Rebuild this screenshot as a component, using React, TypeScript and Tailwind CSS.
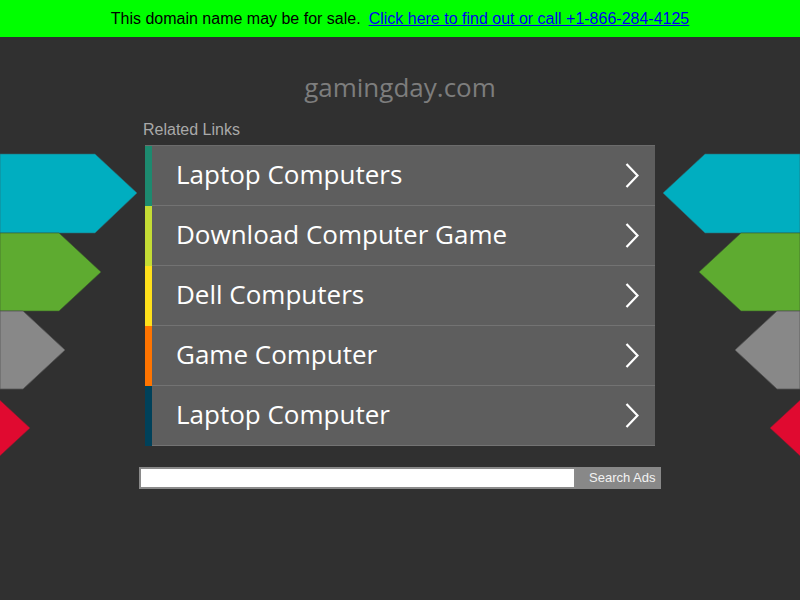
import React from "react";

const links = [
  { label: "Laptop Computers", color: "bg-[#1d8a6f]" },
  { label: "Download Computer Game", color: "bg-[#c4dc35]" },
  { label: "Dell Computers", color: "bg-[#ffe01b]" },
  { label: "Game Computer", color: "bg-[#ff7400]" },
  { label: "Laptop Computer", color: "bg-[#00415a]" },
];

function Chevron() {
  return (
    <svg width="14" height="25" viewBox="0 0 14 25" className="shrink-0">
      <path d="M1.5 1 L12.5 12.5 L1.5 24" fill="none" stroke="#ffffff" strokeWidth="2.2" />
    </svg>
  );
}

// decorative arrow shapes on both edges of the page
function LeftArrows() {
  return (
    <svg width="140" height="320" viewBox="0 0 140 320" className="pointer-events-none absolute left-0 top-[150px]">
      <polygon points="0,4 95,4 137,43 95,83 0,83" fill="#00aec0" stroke="#2a6c74" strokeWidth="0.6" />
      <polygon points="0,83 59,83 101,122 59,161 0,161" fill="#5eab30" stroke="#3b5a2c" strokeWidth="0.6" />
      <polygon points="0,161 23,161 65,200 23,239 0,239" fill="#888888" stroke="#555555" strokeWidth="0.8" />
      <polygon points="-12,239 -12,239 30,278 -12,317" fill="#e00a30" stroke="#7a2030" strokeWidth="0.6" />
    </svg>
  );
}

function RightArrows() {
  return (
    <svg width="140" height="320" viewBox="0 0 140 320" className="pointer-events-none absolute right-0 top-[150px]">
      <polygon points="140,4 45,4 3,43 45,83 140,83" fill="#00aec0" stroke="#2a6c74" strokeWidth="0.6" />
      <polygon points="140,83 81,83 39,122 81,161 140,161" fill="#5eab30" stroke="#3b5a2c" strokeWidth="0.6" />
      <polygon points="140,161 117,161 75,200 117,239 140,239" fill="#888888" stroke="#555555" strokeWidth="0.8" />
      <polygon points="152,239 110,278 152,317" fill="#e00a30" stroke="#7a2030" strokeWidth="0.6" />
    </svg>
  );
}

export default function App() {
  return (
    <div className="relative min-h-[600px] overflow-hidden bg-[#303030]">
      <div className="flex h-[37px] items-center justify-center bg-[#00ff00] font-['Liberation_Sans',Arial,sans-serif] text-[16px] text-black">
        <span>This domain name may be for sale.</span>
        <a href="#" className="ml-[8px] text-[#0000ee] underline">
          Click here to find out or call +1-866-284-4125
        </a>
      </div>

      <LeftArrows />
      <RightArrows />

      <div className="mx-auto w-[522px] pt-[32px]">
        <h1 className="text-center font-['Open_Sans',sans-serif] text-[26px] leading-[36px] text-[#7d7d7d]">
          gamingday.com
        </h1>

        <p className="mt-[16px] pl-[4px] font-['Liberation_Sans',Arial,sans-serif] text-[16px] leading-[18px] text-[#a9a9a9]">
          Related Links
        </p>

        <ul className="mx-auto mt-[6px] w-[510px] border-t border-[#6c6c6c]">
          {links.map((l) => (
            <li key={l.label} className="flex h-[60px]">
              <div className={`w-[7px] shrink-0 ${l.color}`} />
              <a
                href="#"
                className="flex flex-1 items-center justify-between border-b border-[#737373] bg-[#5e5e5e] pl-[24px] pr-[16px]"
              >
                <span className="pb-[4px] font-['Open_Sans',sans-serif] text-[26px] leading-none text-white">
                  {l.label}
                </span>
                <Chevron />
              </a>
            </li>
          ))}
        </ul>

        <form className="mt-[21px] flex h-[22px]">
          <input
            type="text"
            className="h-full flex-1 border-2 border-[#8a8a8a] bg-white outline-none"
          />
          <button
            type="button"
            className="h-full w-[85px] bg-[#888888] pl-[13px] text-left font-['Liberation_Sans',Arial,sans-serif] text-[13px] text-[#f2f2f2]"
          >
            Search Ads
          </button>
        </form>
      </div>
    </div>
  );
}
